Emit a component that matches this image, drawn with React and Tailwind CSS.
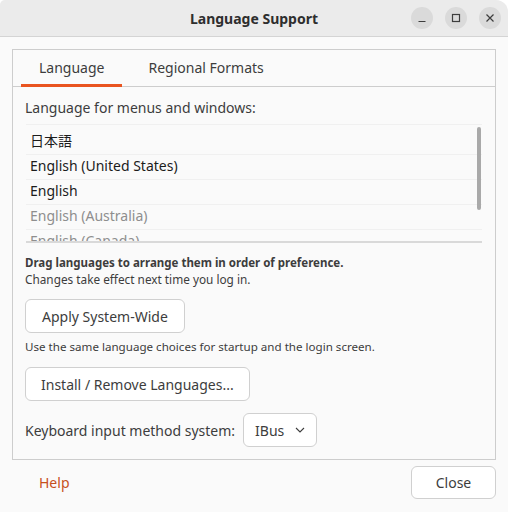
import { useState } from "react";

const languages = [
  { name: "日本語", active: true },
  { name: "English (United States)", active: true },
  { name: "English", active: true },
  { name: "English (Australia)", active: false },
  { name: "English (Canada)", active: false },
  { name: "English (United Kingdom)", active: false },
];

const WindowButton = ({ children }) => (
  <button className="w-[22px] h-[22px] rounded-full bg-[#dadada] flex items-center justify-center text-[#3d3d3d]">
    {children}
  </button>
);

const LanguageSupport = () => {
  const [tab, setTab] = useState("language");

  return (
    <div className="w-[508px] h-[512px] bg-white">
      <div className="w-full h-full flex flex-col bg-[#fafafa] rounded-tl-[5px] rounded-tr-[12px] overflow-hidden font-['Noto_Sans','Noto_Sans_CJK_JP',sans-serif] text-[#3d3d3d]">
        {/* title bar */}
        <div className="h-[37px] shrink-0 grid grid-cols-[1fr_auto_1fr] items-center bg-[#ebebeb] border-b border-[#d4d4d4]">
          <div />
          <div className="text-[14px] font-bold text-[#2e2e2e]">Language Support</div>
          <div className="flex justify-end gap-[12px] pr-[7px]">
            <WindowButton>
              <svg width="10" height="10" viewBox="0 0 10 10">
                <path d="M1.5 8.5h7" stroke="currentColor" strokeWidth="1.2" />
              </svg>
            </WindowButton>
            <WindowButton>
              <svg width="10" height="10" viewBox="0 0 10 10">
                <rect x="1.5" y="1.5" width="7" height="7" fill="none" stroke="currentColor" strokeWidth="1.2" />
              </svg>
            </WindowButton>
            <WindowButton>
              <svg width="10" height="10" viewBox="0 0 10 10">
                <path d="M1.5 1.5l7 7M8.5 1.5l-7 7" stroke="currentColor" strokeWidth="1.2" />
              </svg>
            </WindowButton>
          </div>
        </div>

        {/* notebook */}
        <div className="mx-[12px] mt-[12px] border border-[#cdcdcd] bg-[#fafafa] flex flex-col">
          <div className="h-[37px] flex items-stretch gap-[8px] pl-[8px] border-b border-[#cdcdcd]">
            <button
              onClick={() => setTab("language")}
              className={
                "px-[18px] text-[14px] border-b-[3px] -mb-px " +
                (tab === "language" ? "border-[#e95420]" : "border-transparent")
              }
            >
              Language
            </button>
            <button
              onClick={() => setTab("formats")}
              className={
                "px-[18px] text-[14px] border-b-[3px] -mb-px " +
                (tab === "formats" ? "border-[#e95420]" : "border-transparent")
              }
            >
              Regional Formats
            </button>
          </div>

          <div className="px-[12px] pt-[11px] pb-[12px] flex flex-col">
            <div className="text-[14px] leading-[20px]">Language for menus and windows:</div>

            <div className="relative mt-[6px] ml-px mr-px h-[119px] pt-[5px] overflow-hidden border-t border-[#f0f0f0] border-b-2 border-b-[#d9d9d9] bg-[#fafafa]">
              {languages.map((lang) => (
                <div
                  key={lang.name}
                  className={
                    "h-[25px] pl-[4px] pb-[4px] flex items-center border-b border-[#f0f0f0] text-[14px] " +
                    (lang.active ? "text-[#1c1c1c]" : "text-[#8e8e8e]")
                  }
                >
                  {lang.name}
                </div>
              ))}
              <div className="absolute right-[1px] top-[2px] w-[4px] h-[83px] rounded-full bg-[#a9a9a9]" />
            </div>

            <div className="mt-[12px] text-[11.5px] leading-[16px] font-bold">
              Drag languages to arrange them in order of preference.
            </div>
            <div className="text-[11.8px] leading-[16px]">Changes take effect next time you log in.</div>

            <button className="mt-[12px] self-start h-[34px] px-[16px] rounded-[6px] border border-[#d0d0d0] bg-white text-[14px]">
              Apply System-Wide
            </button>
            <div className="mt-[6px] text-[11.6px] leading-[16px]">
              Use the same language choices for startup and the login screen.
            </div>

            <button className="mt-[12px] self-start h-[34px] px-[15px] rounded-[6px] border border-[#d0d0d0] bg-white text-[14px]">
              Install / Remove Languages...
            </button>

            <div className="mt-[12px] flex items-center gap-[8px]">
              <span className="text-[14px]">Keyboard input method system:</span>
              <button className="h-[34px] pl-[11px] pr-[11px] flex items-center gap-[11px] rounded-[6px] border border-[#d0d0d0] bg-white text-[14px]">
                IBus
                <svg width="10" height="6" viewBox="0 0 10 6">
                  <path d="M1 1l4 4 4-4" fill="none" stroke="currentColor" strokeWidth="1.1" />
                </svg>
              </button>
            </div>
          </div>
        </div>

        {/* action area */}
        <div className="flex items-center justify-between pl-[22px] pr-[12px] pt-[6px]">
          <button className="h-[33px] px-[17px] text-[14px] text-[#c7501c]">Help</button>
          <button className="h-[33px] w-[85px] rounded-[6px] border border-[#d0d0d0] bg-white text-[14px]">
            Close
          </button>
        </div>
      </div>
    </div>
  );
};

export default LanguageSupport;
